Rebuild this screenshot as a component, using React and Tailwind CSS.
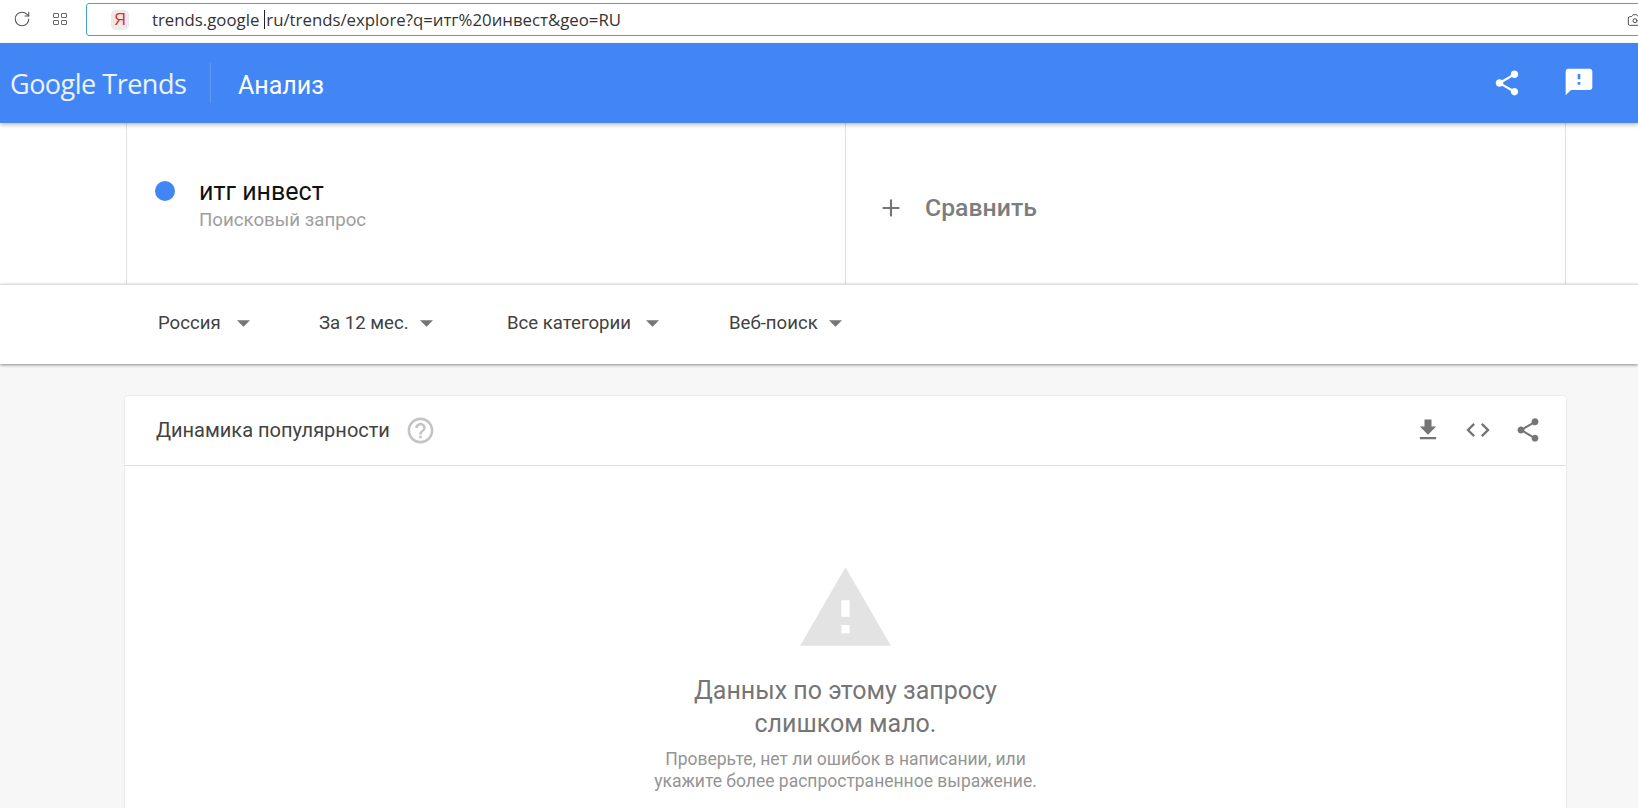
import { RotateCw, Camera, Plus } from "lucide-react";

const Mat = ({ d, size = 24, className = "" }) => (
  <svg width={size} height={size} viewBox="0 0 24 24" fill="currentColor" className={className}>
    <path d={d} />
  </svg>
);

const SHARE = "M18 16.08c-.76 0-1.44.3-1.96.77L8.91 12.7c.05-.23.09-.46.09-.7s-.04-.47-.09-.7l7.05-4.11c.54.5 1.25.81 2.04.81 1.66 0 3-1.34 3-3s-1.34-3-3-3-3 1.34-3 3c0 .24.04.47.09.7L8.04 9.81C7.5 9.31 6.79 9 6 9c-1.66 0-3 1.34-3 3s1.34 3 3 3c.79 0 1.5-.31 2.04-.81l7.12 4.16c-.05.21-.08.43-.08.65 0 1.61 1.31 2.92 2.92 2.92 1.61 0 2.92-1.31 2.92-2.92s-1.31-2.92-2.92-2.92z";
const FEEDBACK = "M20 2H4c-1.1 0-1.99.9-1.99 2L2 22l4-4h14c1.1 0 2-.9 2-2V4c0-1.1-.9-2-2-2zm-7 12h-2v-2h2v2zm0-4h-2V6h2v4z";
const DOWNLOAD = "M19 9h-4V3H9v6H5l7 7 7-7zM5 18v2h14v-2H5z";
const CODE = "M9.4 16.6L4.8 12l4.6-4.6L8 6l-6 6 6 6 1.4-1.4zm5.2 0l4.6-4.6-4.6-4.6L16 6l6 6-6 6-1.4-1.4z";
const WARNING = "M1 21h22L12 2 1 21zm12-3h-2v-2h2v2zm0-4h-2v-4h2v4z";
const HELP = "M11 18h2v-2h-2v2zm1-16C6.48 2 2 6.48 2 12s4.48 10 10 10 10-4.48 10-10S17.52 2 12 2zm0 18c-4.41 0-8-3.59-8-8s3.59-8 8-8 8 3.59 8 8-3.59 8-8 8zm0-14c-2.21 0-4 1.79-4 4h2c0-1.1.9-2 2-2s2 .9 2 2c0 2-3 1.75-3 5h2c0-2.25 3-2.5 3-5 0-2.21-1.79-4-4-4z";

// --- Browser toolbar ---
const BrowserBar = () => (
  <div className="h-[43px] bg-white flex items-start shrink-0 font-['Open_Sans',sans-serif]">
    <div className="w-[86px] h-[37px] flex items-center shrink-0">
      <RotateCw size={18} strokeWidth={1.4} className="ml-[13px] text-[#555]" />
      <div className="ml-[22px] grid grid-cols-2 gap-[2px]">
        {[0, 1, 2, 3].map((i) => (
          <div key={i} className="w-[6px] h-[5px] border border-[#666] rounded-[1px]" />
        ))}
      </div>
    </div>
    <div className="mt-[3px] h-[33px] flex-1 -mr-3 border border-[#4a9fd8] rounded-l-[3px] flex items-center relative">
      <div className="ml-[24px] w-[18px] h-[20px] rounded-[5px] bg-[#eeeaea] flex items-center justify-center text-[16px] leading-none text-[#d8352a] font-['Liberation_Sans',sans-serif]">
        Я
      </div>
      <div className="ml-[23px] text-[16.8px] text-[#333] flex items-center">
        <span>trends.google</span>
        <span className="w-px h-[19px] bg-[#222] ml-[5px] mr-[1px]" />
        <span>ru/trends/explore?q=итг%20инвест&amp;geo=RU</span>
      </div>
      <Camera size={16} strokeWidth={1.4} className="absolute left-[1540px] top-[8px] text-[#444]" />
    </div>
  </div>
);

const Filter = ({ label, width, gap }) => (
  <div className={`flex items-center ${width}`}>
    <span>{label}</span>
    <svg width="13" height="7" viewBox="0 0 14 7" className={`${gap} text-[#757575]`} fill="currentColor">
      <path d="M0 0h14L7 7z" />
    </svg>
  </div>
);

export default function App() {
  return (
    <div className="h-[808px] w-[1638px] overflow-hidden flex flex-col bg-[#f7f7f7] font-['Roboto',sans-serif]">
      <BrowserBar />

      {/* Blue header */}
      <header className="h-[80px] shrink-0 bg-[#4285f4] text-white flex items-center relative z-20 shadow-[0_2px_4px_rgba(0,0,0,0.25)]">
        <div className="ml-[10px] w-[200px] text-[27px] tracking-[-0.5px] pt-[1px] text-white/90 font-['Open_Sans',sans-serif] leading-none">
          Google Trends
        </div>
        <div className="w-px h-[40px] bg-white/15" />
        <div className="ml-[27px] text-[25px] pt-[5px]">Анализ</div>
        <div className="ml-auto flex items-center">
          <Mat d={SHARE} size={30} />
          <Mat d={FEEDBACK} size={32} className="ml-[41px] mr-[43px] -mt-[2px]" />
        </div>
      </header>

      {/* Search term row */}
      <section className="h-[161px] shrink-0 bg-white flex pl-[126px]">
        <div className="w-[720px] border-x border-[#e0e0e0] flex items-start pl-[28px] pt-[58px] shrink-0">
          <div className="w-[20px] h-[20px] rounded-full bg-[#4285f4]" />
          <div className="ml-[24px] -mt-[3px]">
            <div className="text-[25px] leading-[28px] text-[#111]">итг инвест</div>
            <div className="text-[18.7px] leading-[22px] mt-[3px] text-[#9e9e9e]">Поисковый запрос</div>
          </div>
        </div>
        <div className="w-[720px] border-r border-[#e0e0e0] flex items-center pl-[32px] pt-[8px] shrink-0">
          <Plus size={26} strokeWidth={2} className="text-[#757575]" />
          <span className="ml-[21px] text-[24.8px] font-medium text-[#7d7d7d]">Сравнить</span>
        </div>
      </section>

      {/* Filters */}
      <section className="h-[80px] shrink-0 bg-white border-t border-[#e0e0e0] flex items-center pl-[158px] pb-[1px] text-[18.6px] text-[#424242] relative z-10 shadow-[0_1px_3px_rgba(0,0,0,0.45)]">
        <Filter label="Россия" width="w-[161px]" gap="ml-[16px]" />
        <Filter label="За 12 мес." width="w-[188px]" gap="ml-[11px]" />
        <Filter label="Все категории" width="w-[222px]" gap="ml-[15px]" />
        <Filter label="Веб-поиск" width="w-[130px]" gap="ml-[11px]" />
      </section>

      {/* Chart card */}
      <main className="flex-1 pt-[32px] pl-[125px] pr-[72px] min-h-0">
        <div className="h-[500px] bg-white rounded-t-[3px] shadow-[0_0_2px_rgba(0,0,0,0.15)]">
          <div className="h-[70px] border-b border-[#e0e0e0] flex items-center pl-[31px] pr-[24px] pb-[1px]">
            <span className="text-[20px] text-[#424242]">Динамика популярности</span>
            <Mat d={HELP} size={31} className="ml-[15px] text-[#c4c4c4]" />
            <div className="ml-auto flex items-center gap-[22px] text-[#757575]">
              <Mat d={DOWNLOAD} size={28} />
              <Mat d={CODE} size={28} />
              <Mat d={SHARE} size={28} />
            </div>
          </div>
          <div className="flex flex-col items-center pt-[93px]">
            <Mat d={WARNING} size={99} className="text-[#e3e3e3]" />
            <div className="mt-[16px] text-[25px] leading-[33px] text-[#757575] text-center">
              Данных по этому запросу
              <br />
              слишком мало.
            </div>
            <div className="mt-[8px] text-[17.5px] leading-[22px] text-[#949494] text-center">
              Проверьте, нет ли ошибок в написании, или
              <br />
              укажите более распространенное выражение.
            </div>
          </div>
        </div>
      </main>
    </div>
  );
}
